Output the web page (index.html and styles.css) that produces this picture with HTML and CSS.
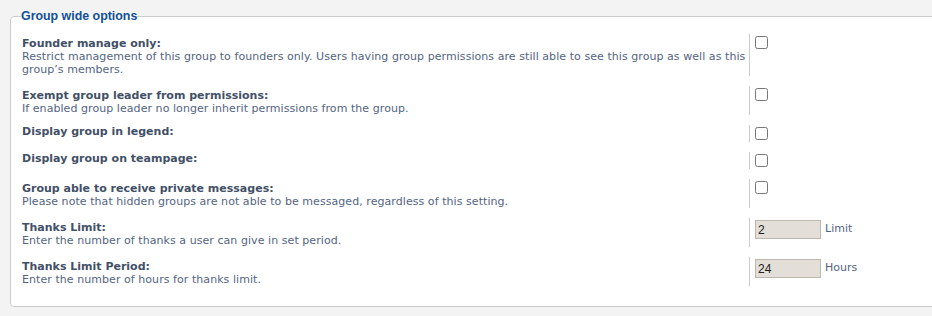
FILE: index.html
```html
<!DOCTYPE html>
<html lang="en">
<head>
    <meta charset="UTF-8">
    <link rel="stylesheet" href="styles.css">
    <title>Group wide options</title>
</head>
<body>
    <fieldset class="options">
        <legend>Group wide options</legend>

        <dl>
            <dt><label>Founder manage only:</label><span>Restrict management of this group to founders only. Users having group permissions are still able to see this group as well as this group’s members.</span></dt>
            <dd><input type="checkbox"></dd>
        </dl>
        <dl>
            <dt><label>Exempt group leader from permissions:</label><span>If enabled group leader no longer inherit permissions from the group.</span></dt>
            <dd><input type="checkbox"></dd>
        </dl>
        <dl>
            <dt class="single"><label>Display group in legend:</label></dt>
            <dd><input type="checkbox"></dd>
        </dl>
        <dl>
            <dt class="single"><label>Display group on teampage:</label></dt>
            <dd><input type="checkbox"></dd>
        </dl>
        <dl>
            <dt><label>Group able to receive private messages:</label><span>Please note that hidden groups are not able to be messaged, regardless of this setting.</span></dt>
            <dd><input type="checkbox"></dd>
        </dl>
        <dl>
            <dt><label>Thanks Limit:</label><span>Enter the number of thanks a user can give in set period.</span></dt>
            <dd><input class="text" type="text" value="2"><span class="unit">Limit</span></dd>
        </dl>
        <dl>
            <dt><label>Thanks Limit Period:</label><span>Enter the number of hours for thanks limit.</span></dt>
            <dd><input class="text" type="text" value="24"><span class="unit">Hours</span></dd>
        </dl>
    </fieldset>
</body>
</html>
```

FILE: styles.css
```css
body {
    margin: 0;
    background-color: #f3f3f3;
    font-family: "DejaVu Sans", Verdana, sans-serif;
    font-size: 11px;
    overflow: hidden;
}

.options {
    width: 960px;
    margin: 9px 0 0 10px;
    padding: 11px 0 10px 11px;
    background-color: #fff;
    border: 1px solid #ccc;
    border-radius: 4px;
    box-shadow: 0 1px 1px rgba(0, 0, 0, 0.06);
}

.options legend {
    margin-left: -1px;
    padding: 0;
    font-family: "Liberation Sans", Arial, sans-serif;
    font-size: 12.4px;
    font-weight: bold;
    line-height: 14px;
    color: #115098;
}

dl {
    display: flex;
    margin: 0 0 10px;
}

dt {
    width: 727px;
    padding-top: 3px;
    border-right: 1px solid #ccc;
    line-height: 13px;
}

dt.single {
    padding-top: 0;
    line-height: 14px;
}

dt label {
    display: block;
    font-weight: bold;
    color: #425067;
}

dt span {
    display: block;
    letter-spacing: 0.06px;
    color: #536482;
}

dd {
    display: flex;
    align-items: flex-start;
    margin: 0;
    padding-left: 5px;
}

dd input[type="checkbox"] {
    width: 13px;
    height: 13px;
    margin: 2px 0;
}

.text {
    box-sizing: border-box;
    width: 66px;
    height: 19px;
    margin: 2px 0 0;
    padding: 1px 2px;
    background-color: #e3dfd8;
    border: 1px solid #bdb8ad;
    font-family: "Liberation Sans", Arial, sans-serif;
    font-size: 12px;
    color: #222;
}

.unit {
    margin: 2px 0 0 4px;
    line-height: 17px;
    color: #536482;
}
```
